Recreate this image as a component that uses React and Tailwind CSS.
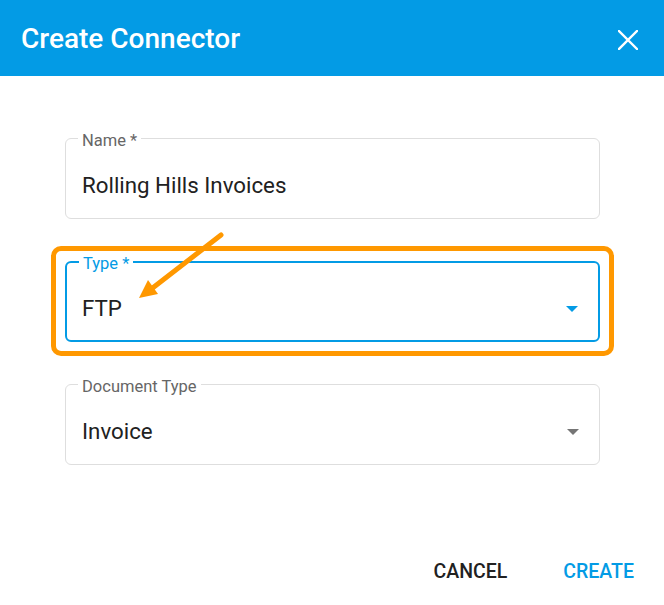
import React from "react";

const Caret = ({ color }) => (
  <svg width="12" height="6" viewBox="0 0 12 6" className="shrink-0">
    <path d="M0 0 L12 0 L6 6 Z" fill={color} />
  </svg>
);

const Field = ({ label, value, select, focused }) => (
  <div
    className={`relative h-[81px] rounded-md flex items-center pt-[14px] pl-4 pr-[20px] ${
      focused ? "border-2 border-[#039be5] pl-[15px]" : "border border-[#dedede]"
    }`}
  >
    <span
      className={`absolute left-3 px-1 bg-white text-[16.5px] leading-5 ${
        focused ? "top-[-9px] text-[#039be5]" : "top-[-8px] text-[#666666]"
      }`}
    >
      {label}
    </span>
    <span className="flex-1 text-[22.3px] text-[#212121]">{value}</span>
    {select && <Caret color={focused ? "#039be5" : "#757575"} />}
  </div>
);

export default function App() {
  return (
    <div
      className="relative w-[664px] h-[605px] bg-white overflow-hidden"
      style={{ fontFamily: "Roboto, 'Noto Sans', sans-serif" }}
    >
      <div className="h-[76px] bg-[#039be5] flex items-center justify-between pl-[21px] pr-[26px]">
        <h1 className="text-white text-[28px] font-medium leading-none pt-[2px]">Create Connector</h1>
        <svg width="20" height="20" viewBox="0 0 20 20" className="mt-[3px]">
          <path d="M1 1 L19 19 M19 1 L1 19" stroke="white" strokeWidth="2.4" strokeLinecap="square" />
        </svg>
      </div>

      <div className="pt-[62px] pl-[65px] pr-[64px] flex flex-col gap-[42px]">
        <Field label="Name *" value="Rolling Hills Invoices" />
        <div className="relative">
          <Field label="Type *" value="FTP" select focused />
          <div className="absolute -left-[14px] -right-[14px] -top-[15px] -bottom-[14px] border-[5px] border-[#ff9800] rounded-[10px] pointer-events-none" />
        </div>
        <Field label="Document Type" value="Invoice" select />
      </div>

      <div className="flex justify-end gap-[28px] pr-[16px] mt-[87px]">
        <button className="h-10 px-[14px] text-[19.5px] font-medium text-[#212121] uppercase">Cancel</button>
        <button className="h-10 px-[14px] text-[19.5px] font-medium text-[#039be5] uppercase">Create</button>
      </div>

      <svg className="absolute inset-0 pointer-events-none" width="664" height="605" viewBox="0 0 664 605">
        <line x1="221" y1="235" x2="150" y2="290" stroke="#ff9800" strokeWidth="5" strokeLinecap="round" />
        <polygon points="139,298 148,280 158,294" fill="#ff9800" />
      </svg>
    </div>
  );
}
